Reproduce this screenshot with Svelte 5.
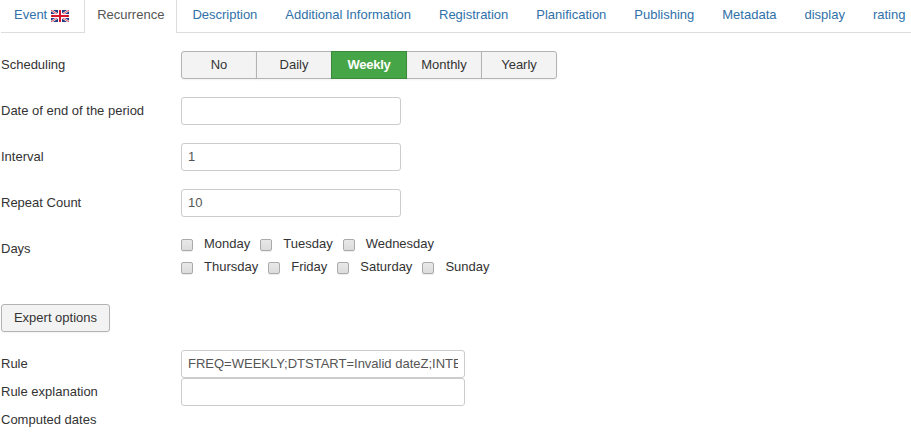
<script>
  const tabs = [
    { label: 'Event', flag: true },
    { label: 'Recurrence', active: true },
    { label: 'Description' },
    { label: 'Additional Information' },
    { label: 'Registration' },
    { label: 'Planification' },
    { label: 'Publishing' },
    { label: 'Metadata' },
    { label: 'display' },
    { label: 'rating' }
  ];
  const frequencies = ['No', 'Daily', 'Weekly', 'Monthly', 'Yearly'];
  const fields = [
    { id: 'end', label: 'Date of end of the period', value: '' },
    { id: 'interval', label: 'Interval', value: '1' },
    { id: 'count', label: 'Repeat Count', value: '10' }
  ];
  const dayRows = [
    ['Monday', 'Tuesday', 'Wednesday'],
    ['Thursday', 'Friday', 'Saturday', 'Sunday']
  ];
  let selected = $state('Weekly');
</script>

<main>
  <nav>
    {#each tabs as tab}
      <a href="#top" class:active={tab.active}>
        <span>{tab.label}</span>
        {#if tab.flag}
          <svg width="18" height="12" viewBox="0 0 18 12">
            <rect width="18" height="12" fill="#263a80" />
            <path d="M0 0L18 12M18 0L0 12" stroke="#fff" stroke-width="2.2" />
            <path d="M0 0L18 12M18 0L0 12" stroke="#dc3048" stroke-width="0.9" />
            <path d="M9 0V12M0 6H18" stroke="#fff" stroke-width="4" />
            <path d="M9 0V12M0 6H18" stroke="#d8142c" stroke-width="2" />
          </svg>
        {/if}
      </a>
    {/each}
  </nav>

  <div class="row">
    <div class="label">Scheduling</div>
    <div class="group">
      {#each frequencies as f}
        <button class="btn" class:selected={selected === f} onclick={() => (selected = f)}>{f}</button>
      {/each}
    </div>
  </div>

  {#each fields as field}
    <div class="row">
      <label class="label" for={field.id}>{field.label}</label>
      <input id={field.id} type="text" value={field.value} />
    </div>
  {/each}

  <div class="row days">
    <div class="label">Days</div>
    <div>
      {#each dayRows as row}
        <div class="dayrow">
          {#each row as day}
            <label class="day"><input type="checkbox" /><span>{day}</span></label>
          {/each}
        </div>
      {/each}
    </div>
  </div>

  <button class="btn expert">Expert options</button>

  <div class="row tight">
    <label class="label" for="rule">Rule</label>
    <input id="rule" class="wide" type="text" value="FREQ=WEEKLY;DTSTART=Invalid dateZ;INTERVAL=1;COUNT=10" />
  </div>
  <div class="row tight">
    <label class="label" for="explanation">Rule explanation</label>
    <input id="explanation" class="wide" type="text" />
  </div>
  <div class="row tight">
    <div class="label">Computed dates</div>
  </div>
</main>

<style>
  :global(body) {
    margin: 0;
    background: #fff;
    overflow: hidden;
  }
  main {
    width: 911px;
    height: 433px;
    overflow: hidden;
    padding-left: 1px;
    box-sizing: border-box;
    font: 13px/18px 'Liberation Sans', Arial, sans-serif;
    color: #333;
  }
  nav {
    display: flex;
    height: 33px;
    width: 920px;
    box-sizing: border-box;
    border-bottom: 1px solid #ddd;
    margin-bottom: 18px;
  }
  nav a {
    display: flex;
    flex: none;
    gap: 4px;
    box-sizing: border-box;
    height: 33px;
    padding: 6px 12px 0;
    margin-right: 2px;
    border: 1px solid transparent;
    border-width: 0 1px;
    color: #3071a9;
    text-decoration: none;
    white-space: nowrap;
    letter-spacing: -0.005px;
  }
  nav a.active {
    color: #555;
    background: #fff;
    border-color: #ddd;
  }
  nav svg {
    display: block;
    margin-top: 4px;
  }
  .row {
    display: flex;
    height: 28px;
    margin-bottom: 18px;
  }
  .row.tight {
    margin-bottom: 0;
  }
  .label {
    flex: none;
    width: 180px;
    padding-top: 5px;
    box-sizing: border-box;
  }
  .group {
    display: flex;
  }
  .btn {
    box-sizing: border-box;
    height: 28px;
    padding: 0;
    border: 1px solid #b3b3b3;
    background: #f3f3f3;
    color: #333;
    font: inherit;
    box-shadow: 0 1px 2px rgba(0, 0, 0, 0.05);
  }
  .group .btn {
    width: 76px;
    margin-right: -1px;
  }
  .group .btn:first-child {
    border-radius: 3px 0 0 3px;
  }
  .group .btn:last-child {
    border-radius: 0 3px 3px 0;
    margin-right: 0;
  }
  .group .btn.selected {
    position: relative;
    background: #46a546;
    border-color: #3a8a3a;
    color: #fff;
    font-weight: bold;
    letter-spacing: -0.3px;
  }
  input[type='text'] {
    box-sizing: border-box;
    width: 220px;
    height: 28px;
    margin: 0;
    padding: 3px 6px 5px;
    border: 1px solid #ccc;
    border-radius: 3px;
    background: #fff;
    color: #555;
    font: inherit;
    outline: 0;
  }
  input.wide {
    width: 284px;
  }
  .days {
    height: 46px;
    margin-bottom: 23px;
  }
  .dayrow {
    display: flex;
    height: 23px;
  }
  .day {
    display: flex;
    margin-right: 10px;
  }
  .day input {
    appearance: none;
    box-sizing: border-box;
    width: 12px;
    height: 12px;
    margin: 4px 11px 0 0;
    border: 1px solid #aaa;
    border-radius: 2px;
    background: linear-gradient(#e8e8e8, #dcdcdc);
    box-shadow: 0 1px 0 #eee;
  }
  .expert {
    display: block;
    width: 109px;
    border-radius: 3px;
    margin-bottom: 18px;
  }
</style>
